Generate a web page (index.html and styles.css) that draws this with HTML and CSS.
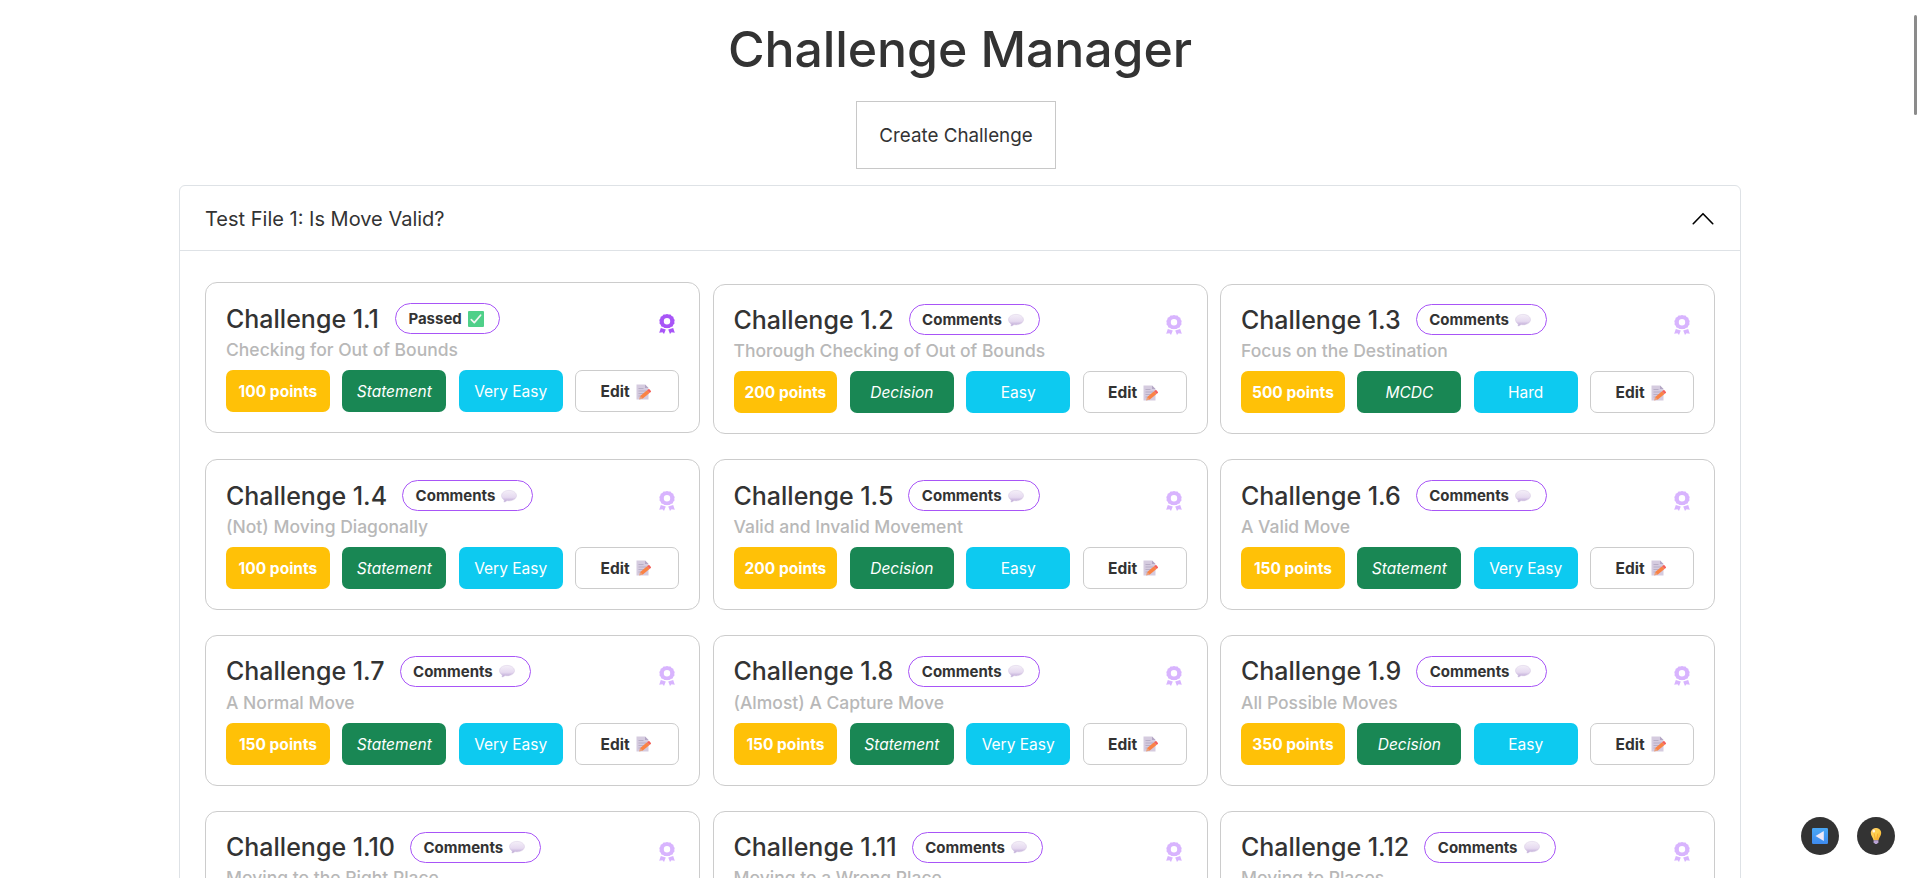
FILE: index.html
```html
<!DOCTYPE html>
<html lang="en">
<head>
<meta charset="utf-8">
<title>Challenge Manager</title>
<link rel="stylesheet" href="styles.css">
</head>
<body>
<svg class="defs" width="0" height="0" aria-hidden="true">
  <defs>
    <linearGradient id="g-bubble" x1="0" y1="0" x2="0" y2="1"><stop offset="0" stop-color="#f4eff8"/><stop offset=".6" stop-color="#e6daf0"/><stop offset="1" stop-color="#b9a3d3"/></linearGradient>
    <linearGradient id="g-bulb" x1="0" y1="0" x2="1" y2="1"><stop offset="0" stop-color="#fbc56a"/><stop offset=".5" stop-color="#ffd24d"/><stop offset="1" stop-color="#f6a62c"/></linearGradient>
    <linearGradient id="g-blue" x1="0" y1="0" x2="0" y2="1"><stop offset="0" stop-color="#4aa8f5"/><stop offset="1" stop-color="#3e8aee"/></linearGradient>
    <symbol id="award" viewBox="0 0 16 20">
      <path fill-rule="evenodd" d="M8 0l1.700.6 1.800 0 1.200 1.300 1.600.8.400 1.800 1 1.500-.4 1.700.2 1.800-1.200 1.300-.7 1.600-1.700.6-1.400 1.100-1.800-.2-.7.300-.7-.3-1.800.2-1.400-1.100-1.700-.6-.7-1.600L.5 9.500l.2-1.800L.3 6l1-1.500.4-1.800 1.600-.8L4.500.6l1.800 0zM8 4a3.200 3.200 0 1 0 0 6.400 3.200 3.200 0 0 0 0-6.400z"/>
      <path d="M1.800 14l5 1.500L5 20l-1.500-1.700L.2 18.800zM14.200 14l-5 1.500L11 20l1.500-1.700 3.300.5z"/>
    </symbol>
    <symbol id="bubble" viewBox="0 0 16 16">
      <path fill="url(#g-bubble)" stroke="#cfc0df" stroke-width=".4" d="M8 2.400c4.300 0 7.500 2.300 7.500 5.200s-3.200 5.200-7.500 5.200c-.7 0-1.400 0-2-.2-.8.9-2 1.400-3.200 1.300.5-.6.6-1.300.3-2C1.500 11 .5 9.400.5 7.600.5 4.700 3.700 2.400 8 2.400z"/>
    </symbol>
    <symbol id="memo" viewBox="0 0 16 16">
      <path fill="#d5cbdf" d="M.5.5H9L12.500 4v11.500H.5z"/>
      <path fill="#b3a6c4" d="M9 .5L12.500 4H9z"/>
      <path stroke="#b0a6bf" stroke-width=".8" d="M2.500 4.500h5M2.500 7H10M2.500 9.500h6M2.500 12h3"/>
      <path fill="#fa8345" d="M4 12.300l7-6 2.500 2.700-7 5.800z"/>
      <path fill="#f4605a" d="M11 6.300l1.300-1.100q.7-.4 1.200.1l1.400 1.600q.4.600-.1 1.100L13.500 9z"/>
      <path fill="#e9a07c" d="M4 12.300l2.500 2.500-3.500.8z"/>
    </symbol>
    <symbol id="check" viewBox="0 0 16 16">
      <rect width="16" height="16" rx="1" fill="#4fd089"/>
      <path fill="none" stroke="#f2f5f3" stroke-width="1.700" stroke-linecap="round" stroke-linejoin="round" d="M3.300 8.600l3 3 6.300-7.400"/>
    </symbol>
  </defs>
</svg>

<main class="page">
  <h1 class="title">Challenge Manager</h1>
  <button class="create">Create Challenge</button>

  <section class="accordion">
    <header class="accordion-header">
      <span>Test File 1: Is Move Valid?</span>
      <svg class="chevron" viewBox="0 0 20 12"><path d="M1 10.800L10 1.600l9 9.200"/></svg>
    </header>
    <div class="cards">
      <article class="card passed">
        <div class="card-head"><h2>Challenge 1.1</h2><span class="badge">Passed <svg><use href="#check"/></svg></span><svg class="award"><use href="#award"/></svg></div>
        <p>Checking for Out of Bounds</p>
        <div class="tags"><span class="tag points">100 points</span><span class="tag kind">Statement</span><span class="tag level">Very Easy</span><span class="tag edit">Edit <svg><use href="#memo"/></svg></span></div>
      </article>
      <article class="card">
        <div class="card-head"><h2>Challenge 1.2</h2><span class="badge">Comments <svg><use href="#bubble"/></svg></span><svg class="award"><use href="#award"/></svg></div>
        <p>Thorough Checking of Out of Bounds</p>
        <div class="tags"><span class="tag points">200 points</span><span class="tag kind">Decision</span><span class="tag level">Easy</span><span class="tag edit">Edit <svg><use href="#memo"/></svg></span></div>
      </article>
      <article class="card">
        <div class="card-head"><h2>Challenge 1.3</h2><span class="badge">Comments <svg><use href="#bubble"/></svg></span><svg class="award"><use href="#award"/></svg></div>
        <p>Focus on the Destination</p>
        <div class="tags"><span class="tag points">500 points</span><span class="tag kind">MCDC</span><span class="tag level">Hard</span><span class="tag edit">Edit <svg><use href="#memo"/></svg></span></div>
      </article>
      <article class="card">
        <div class="card-head"><h2>Challenge 1.4</h2><span class="badge">Comments <svg><use href="#bubble"/></svg></span><svg class="award"><use href="#award"/></svg></div>
        <p>(Not) Moving Diagonally</p>
        <div class="tags"><span class="tag points">100 points</span><span class="tag kind">Statement</span><span class="tag level">Very Easy</span><span class="tag edit">Edit <svg><use href="#memo"/></svg></span></div>
      </article>
      <article class="card">
        <div class="card-head"><h2>Challenge 1.5</h2><span class="badge">Comments <svg><use href="#bubble"/></svg></span><svg class="award"><use href="#award"/></svg></div>
        <p>Valid and Invalid Movement</p>
        <div class="tags"><span class="tag points">200 points</span><span class="tag kind">Decision</span><span class="tag level">Easy</span><span class="tag edit">Edit <svg><use href="#memo"/></svg></span></div>
      </article>
      <article class="card">
        <div class="card-head"><h2>Challenge 1.6</h2><span class="badge">Comments <svg><use href="#bubble"/></svg></span><svg class="award"><use href="#award"/></svg></div>
        <p>A Valid Move</p>
        <div class="tags"><span class="tag points">150 points</span><span class="tag kind">Statement</span><span class="tag level">Very Easy</span><span class="tag edit">Edit <svg><use href="#memo"/></svg></span></div>
      </article>
      <article class="card">
        <div class="card-head"><h2>Challenge 1.7</h2><span class="badge">Comments <svg><use href="#bubble"/></svg></span><svg class="award"><use href="#award"/></svg></div>
        <p>A Normal Move</p>
        <div class="tags"><span class="tag points">150 points</span><span class="tag kind">Statement</span><span class="tag level">Very Easy</span><span class="tag edit">Edit <svg><use href="#memo"/></svg></span></div>
      </article>
      <article class="card">
        <div class="card-head"><h2>Challenge 1.8</h2><span class="badge">Comments <svg><use href="#bubble"/></svg></span><svg class="award"><use href="#award"/></svg></div>
        <p>(Almost) A Capture Move</p>
        <div class="tags"><span class="tag points">150 points</span><span class="tag kind">Statement</span><span class="tag level">Very Easy</span><span class="tag edit">Edit <svg><use href="#memo"/></svg></span></div>
      </article>
      <article class="card">
        <div class="card-head"><h2>Challenge 1.9</h2><span class="badge">Comments <svg><use href="#bubble"/></svg></span><svg class="award"><use href="#award"/></svg></div>
        <p>All Possible Moves</p>
        <div class="tags"><span class="tag points">350 points</span><span class="tag kind">Decision</span><span class="tag level">Easy</span><span class="tag edit">Edit <svg><use href="#memo"/></svg></span></div>
      </article>
      <article class="card">
        <div class="card-head"><h2>Challenge 1.10</h2><span class="badge">Comments <svg><use href="#bubble"/></svg></span><svg class="award"><use href="#award"/></svg></div>
        <p>Moving to the Right Place</p>
      </article>
      <article class="card">
        <div class="card-head"><h2>Challenge 1.11</h2><span class="badge">Comments <svg><use href="#bubble"/></svg></span><svg class="award"><use href="#award"/></svg></div>
        <p>Moving to a Wrong Place</p>
      </article>
      <article class="card">
        <div class="card-head"><h2>Challenge 1.12</h2><span class="badge">Comments <svg><use href="#bubble"/></svg></span><svg class="award"><use href="#award"/></svg></div>
        <p>Moving to Places</p>
      </article>
    </div>
  </section>
</main>

<div class="fabs">
  <button class="fab"><svg viewBox="0 0 16 16"><rect width="16" height="16" rx="1.200" fill="url(#g-blue)"/><path fill="#efe9f8" d="M3.500 8L11.800 2.900v10.200z"/></svg></button>
  <button class="fab"><svg viewBox="0 0 16 16"><path fill="url(#g-bulb)" d="M8 0c3 0 5.200 2.200 5.200 5 0 3.300-2.400 4.400-2.700 7.300h-5C5.200 9.400 2.800 8.300 2.800 5 2.800 2.200 5 0 8 0z"/><path fill="none" stroke="#f08c1e" stroke-width=".5" d="M6.200 5.500l1 6M9.800 5.500l-1 6"/><ellipse cx="5.800" cy="3" rx="1.300" ry="1.500" fill="#fff" opacity=".8"/><path fill="#b9a3d3" d="M5.600 12.300h4.800v1.900L8.900 16H7.100l-1.500-1.800z"/></svg></button>
</div>
<div class="scroll-thumb"></div>
</body>
</html>
```
FILE: styles.css
```css
* { box-sizing: border-box; }

html { overflow: hidden; }

body {
  margin: 0;
  height: 878px;
  overflow: hidden;
  background: #fff;
  color: #333;
  font-family: Inter, sans-serif;
}

button { font: inherit; color: inherit; }

.defs { position: absolute; }

.page {
  display: flex;
  flex-direction: column;
  align-items: center;
  height: 878px;
  overflow: hidden;
}

.title {
  flex: none;
  margin: 19px 0 22px;
  font-size: 50px;
  line-height: 60px;
  font-weight: 500;
  letter-spacing: -0.1px;
}

.create {
  flex: none;
  width: 200px;
  height: 68px;
  margin-right: 8px;
  padding: 0;
  border: 1px solid #c8c8c8;
  background: #fff;
  font-size: 18.800px;
}

.accordion {
  flex: none;
  width: 1562px;
  height: 900px;
  margin-top: 16px;
  border: 1px solid #dee2e6;
  border-radius: 6px;
}

.accordion-header {
  display: flex;
  justify-content: space-between;
  align-items: center;
  height: 65px;
  padding: 0 26px 0 25px;
  border-bottom: 1px solid #dee2e6;
  font-size: 20px;
}

.accordion-header span { padding-top: 2px; }

.chevron {
  width: 22px;
  height: 13px;
  fill: none;
  stroke: #000;
  stroke-width: 1.5;
  stroke-linecap: round;
  stroke-linejoin: round;
}

.cards {
  display: grid;
  grid-template-columns: repeat(3, 1fr);
  grid-auto-rows: 151px;
  gap: 24.750px 12.500px;
  align-items: start;
  padding: 31px 25px;
}

.card {
  height: 150.500px;
  margin-top: 1.600px;
  padding: 20px;
  border: 1px solid #ccc;
  border-radius: 12px;
}

.card.passed { height: 151px; margin-top: 0; }

.card-head {
  display: flex;
  align-items: center;
  height: 30.500px;
}

.passed .card-head { height: 31px; }

.card h2 {
  margin: 0 15px 0 0;
  font-size: 25px;
  font-weight: 500;
  line-height: 30px;
}

.badge {
  display: flex;
  align-items: center;
  gap: 6px;
  height: 31px;
  padding: 0 15px 0 12.500px;
  border: 1px solid #a855f7;
  border-radius: 16px;
  color: #333;
  font-size: 15px;
  font-weight: 700;
}

.passed .badge { margin-left: 1px; }

.badge svg { width: 16px; height: 16px; }

.award {
  width: 16px;
  height: 20px;
  margin: 10px 4.500px 0 auto;
  fill: #d8b4fe;
}

.passed .award { margin-top: 11px; fill: #a855f7; }

.card p {
  margin: 4px 0 8px;
  color: #b8b8b8;
  font-size: 17.500px;
  font-weight: 500;
  line-height: 24px;
}

.passed p { margin: 4px 0 8px; }

.tags {
  display: grid;
  grid-template-columns: repeat(4, 1fr);
  gap: 12.500px;
}

.tag {
  display: flex;
  align-items: center;
  justify-content: center;
  gap: 6px;
  height: 42px;
  padding-top: 1px;
  border-radius: 7px;
  color: #fff;
  font-size: 15.500px;
}

.points { background: #ffc107; font-weight: 700; }
.kind { background: #198754; font-style: italic; }
.level { background: #0dcaf0; }

.edit {
  padding-right: 2px;
  border: 1px solid #ccc;
  color: #333;
  font-weight: 700;
}

.edit svg { width: 16px; height: 16px; }

.fabs {
  position: fixed;
  right: 25px;
  bottom: 23px;
  display: flex;
  gap: 18px;
}

.fab {
  display: flex;
  align-items: center;
  justify-content: center;
  width: 38px;
  height: 38px;
  padding: 0;
  border: 0;
  border-radius: 50%;
  background: #333;
}

.fab svg { width: 16px; height: 16px; }

.scroll-thumb {
  position: fixed;
  top: 15px;
  right: 3px;
  width: 3px;
  height: 100px;
  border-radius: 2px;
  background: #8b8b8b;
}
```
